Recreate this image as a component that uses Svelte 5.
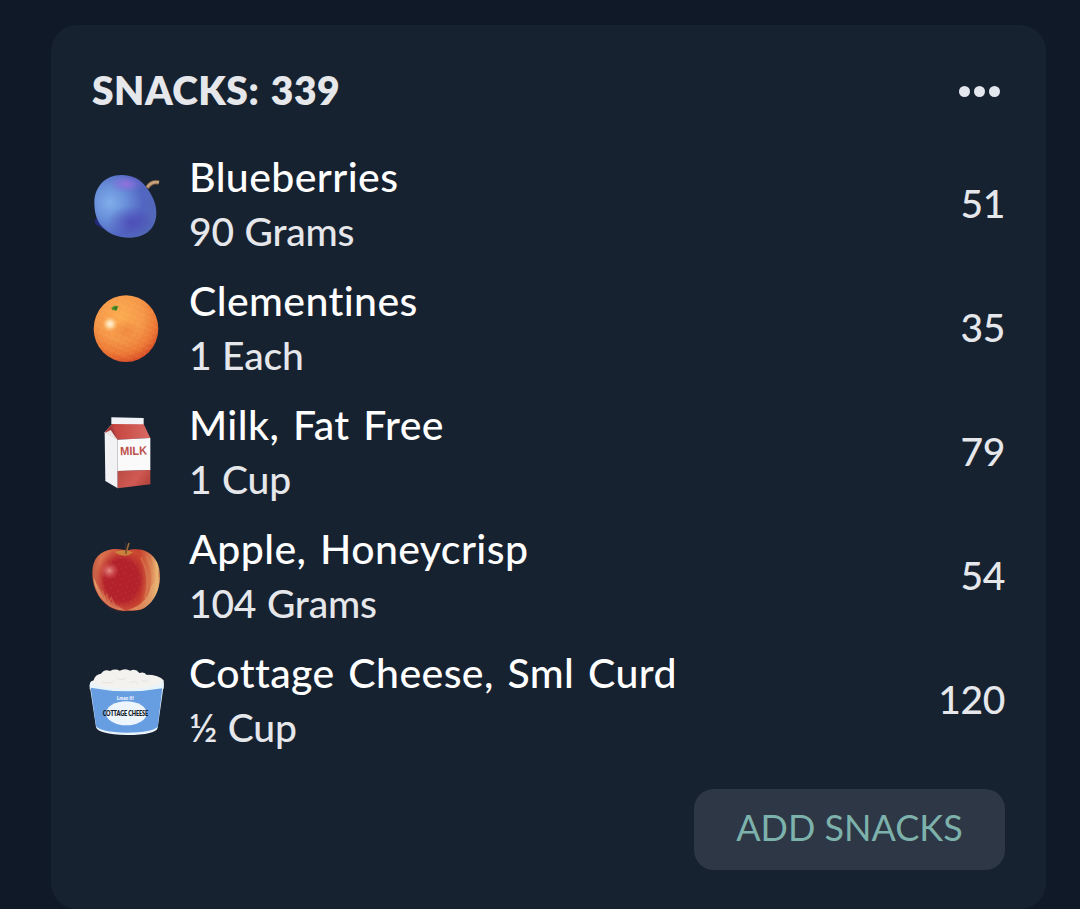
<script>
  const title = 'Snacks';

  const items = [
    { icon: 'blueberry', name: 'Blueberries', amount: '90 Grams', calories: 51 },
    { icon: 'clementine', name: 'Clementines', amount: '1 Each', calories: 35 },
    { icon: 'milk', name: 'Milk, Fat Free', amount: '1 Cup', calories: 79 },
    { icon: 'apple', name: 'Apple, Honeycrisp', amount: '104 Grams', calories: 54 },
    { icon: 'cottage', name: 'Cottage Cheese, Sml Curd', amount: '½ Cup', calories: 120 }
  ];

  const total = items.reduce((sum, item) => sum + item.calories, 0);
</script>

<main>
  <section class="card">
    <header>
      <h2>{title}: {total}</h2>
      <button class="more" aria-label="More options">
        <span></span><span></span><span></span>
      </button>
    </header>

    <ul>
      {#each items as item}
        <li>
          {#if item.icon === 'blueberry'}
            <svg class="icon" viewBox="27 6 228 252">
              <defs>
                <radialGradient id="berry" cx=".25" cy=".44" r=".82">
                  <stop offset="0" stop-color="#80adeb" />
                  <stop offset=".3" stop-color="#6a92db" />
                  <stop offset=".65" stop-color="#5266c2" />
                  <stop offset="1" stop-color="#5268b5" />
                </radialGradient>
                <radialGradient id="bloom">
                  <stop offset="0" stop-color="#9a70df" stop-opacity=".9" />
                  <stop offset="1" stop-color="#806edb" stop-opacity="0" />
                </radialGradient>
                <radialGradient id="shade">
                  <stop offset="0" stop-color="#493daf" stop-opacity=".65" />
                  <stop offset="1" stop-color="#493daf" stop-opacity="0" />
                </radialGradient>
              </defs>
              <path d="M44 180l12-9 22 39-16-7-16-11z" fill="#232979" />
              <path d="M201 85q12-23 36-17" fill="none" stroke="#735139" stroke-width="13" />
              <path d="M202 82q11-19 35-15" fill="none" stroke="#c3a27b" stroke-width="8" />
              <path d="M43 128C43 80 77 45 123 45C160 45 186 61 205 90C220 113 230 135 229 163C227 205 198 232 152 233C118 234 83 223 62 195C48 176 43 153 43 128z" fill="url(#berry)" />
              <ellipse cx="138" cy="72" rx="53" ry="27" fill="url(#bloom)" />
              <ellipse cx="152" cy="184" rx="70" ry="48" fill="url(#shade)" />
            </svg>
          {:else if item.icon === 'clementine'}
            <svg class="icon" viewBox="27 3 228 252">
              <defs>
                <radialGradient id="peel" cx=".4" cy=".3" r=".72">
                  <stop offset="0" stop-color="#fdac52" />
                  <stop offset=".5" stop-color="#f59849" />
                  <stop offset=".8" stop-color="#ec7836" />
                  <stop offset="1" stop-color="#d84d28" />
                </radialGradient>
                <radialGradient id="shine">
                  <stop offset="0" stop-color="#fff3db" />
                  <stop offset=".4" stop-color="#ffe0b0" stop-opacity=".9" />
                  <stop offset="1" stop-color="#ffc07a" stop-opacity="0" />
                </radialGradient>
                <radialGradient id="warm">
                  <stop offset="0" stop-color="#e97736" stop-opacity=".55" />
                  <stop offset="1" stop-color="#e97736" stop-opacity="0" />
                </radialGradient>
                <pattern id="pores" width="19" height="17" patternUnits="userSpaceOnUse" patternTransform="rotate(24)">
                  <circle cx="2" cy="3" r="1.8" fill="#ffcb74" opacity=".4" />
                  <circle cx="13" cy="7" r="1.8" fill="#ffcb74" opacity=".35" />
                  <circle cx="7" cy="12" r="1.6" fill="#d96922" opacity=".25" />
                </pattern>
              </defs>
              <ellipse cx="138" cy="131" rx="97" ry="100" fill="url(#peel)" />
              <ellipse cx="138" cy="138" rx="44" ry="34" fill="url(#warm)" />
              <ellipse cx="138" cy="131" rx="95" ry="98" fill="url(#pores)" />
              <circle cx="90" cy="117" r="23" fill="url(#shine)" />
              <path d="M94 68l9-6 12 1-2 7-4 8-8-3-4 1z" fill="#559126" />
              <path d="M101 69l11-3-5 8z" fill="#286922" />
            </svg>
          {:else if item.icon === 'milk'}
            <svg class="icon" viewBox="27 15 228 252">
              <defs>
                <linearGradient id="roof">
                  <stop offset="0" stop-color="#c5423d" />
                  <stop offset="1" stop-color="#d86a63" />
                </linearGradient>
                <linearGradient id="band" x2="1" y2=".4">
                  <stop offset="0" stop-color="#b94b45" />
                  <stop offset=".65" stop-color="#d05a53" />
                  <stop offset="1" stop-color="#b94740" />
                </linearGradient>
              </defs>
              <path d="M74 82l20-23 19 45v146l-37-22z" fill="#f2f1f4" />
              <path d="M74 82l20-23 19 44z" fill="#a93735" />
              <path d="M75 84l17-9 19 28z" fill="#ece5e7" />
              <path d="M94 57h97l20 42-98 5z" fill="url(#roof)" />
              <path d="M94 37l97 2v19l-97-1z" fill="#f1f3f6" />
              <path d="M113 104l98-5v97l-98 2z" fill="#fbfafb" />
              <path d="M113 198l98-3v43l-98 12z" fill="url(#band)" />
              <text x="121" y="151" transform="rotate(-2 121 151)" textLength="81" lengthAdjust="spacingAndGlyphs" font-family="Liberation Sans, sans-serif" font-weight="700" font-size="36" fill="#bd4f49">MILK</text>
            </svg>
          {:else if item.icon === 'apple'}
            <svg class="icon" viewBox="27 12 228 252">
              <defs>
                <linearGradient id="skin">
                  <stop offset="0" stop-color="#c05a42" />
                  <stop offset=".12" stop-color="#d9714f" />
                  <stop offset=".7" stop-color="#c9442f" />
                  <stop offset=".86" stop-color="#d6784e" />
                  <stop offset=".96" stop-color="#edbd77" />
                  <stop offset="1" stop-color="#bb6947" />
                </linearGradient>
                <radialGradient id="blush">
                  <stop offset="0" stop-color="#b3202a" />
                  <stop offset=".65" stop-color="#b3232b" />
                  <stop offset="1" stop-color="#bc2b2b" stop-opacity="0" />
                </radialGradient>
                <radialGradient id="gloss">
                  <stop offset="0" stop-color="#ef9a91" stop-opacity=".9" />
                  <stop offset="1" stop-color="#d95b57" stop-opacity="0" />
                </radialGradient>
                <pattern id="freckles" width="23" height="19" patternUnits="userSpaceOnUse" patternTransform="rotate(18)">
                  <circle cx="4" cy="5" r="1.5" fill="#ed8270" opacity=".4" />
                  <circle cx="15" cy="14" r="1.3" fill="#ed8270" opacity=".35" />
                </pattern>
              </defs>
              <path d="M37 125c1-39 22-61 59-67 17-3 29 2 43 3 18-3 43-7 63 5 27 15 39 44 38 76-1 35-17 71-44 90-20 14-40 9-61 11-25-2-45-8-63-26-25-24-36-59-35-92z" fill="url(#skin)" />
              <path d="M40 140q4 44 34 75 24 26 61 27-19-14-43-28-32-24-52-74z" fill="#ecb97b" opacity=".75" />
              <path d="M139 241c34-8 66-30 74-72l26-29c1 43-17 75-45 93-15 9-34 8-55 8z" fill="#e8b374" opacity=".6" />
              <ellipse cx="125" cy="151" rx="80" ry="97" fill="url(#blush)" />
              <ellipse cx="127" cy="151" rx="68" ry="80" fill="url(#freckles)" />
              <path d="M182 82q32 58 12 122M199 79q33 54 8 116M215 84q26 48 4 94" fill="none" stroke="#e9a269" stroke-width="5" opacity=".3" />
              <path d="M68 182l8 26 5-15 6 23 7-14 9 24" fill="none" stroke="#e38b59" stroke-width="4" opacity=".4" />
              <ellipse cx="88" cy="122" rx="29" ry="27" fill="url(#gloss)" />
              <path d="M103 65q31-10 57 2-10 9-24 10-18 0-33-12z" fill="#cd8d3d" opacity=".85" />
              <path d="M137 72q5-17 10-33" fill="none" stroke="#9b6a35" stroke-width="5" />
              <path d="M138 71q0-16-2-35" fill="none" stroke="#57352b" stroke-width="2" />
            </svg>
          {:else}
            <svg class="icon" viewBox="27 9 228 252">
              <path d="M29 93q1-14 12-17 4-18 22-20 11-15 27-8 16-8 29-1 17-9 32 0 16-8 27 7 15-4 21 5 39 0 52 17v25q-106 21-222 2z" fill="#f3f2ef" />
              <path d="M29 91q0-8 5-13 15 22 107 24 89-1 108-24 4 7 1 20l-17 120q-3 21-93 22-87-3-92-24z" fill="#e8f4fa" />
              <path d="M32 98q108 21 215 2l-14 115q-15 17-93 18-80-2-92-20z" fill="#679ee2" />
              <path d="M66 80q21 8 34 0m10-12q13 12 28 0m10 16q15-9 26 1m10-8q14 5 22-1" fill="none" stroke="#dedbd4" stroke-width="3" opacity=".6" />
              <ellipse cx="139" cy="175" rx="61" ry="36" fill="#edf5ff" />
              <text x="136" y="134" text-anchor="middle" font-family="Lato, sans-serif" font-size="14" font-weight="900" fill="#f7fbff">Lmao It!</text>
              <g transform="translate(136 182) scale(1 1.5)">
                <text text-anchor="middle" font-family="Lato, sans-serif" font-size="16.5" font-weight="800" letter-spacing="-.3" fill="#101823">COTTAGE CHEESE</text>
              </g>
            </svg>
          {/if}

          <div class="info">
            <span class="name">{item.name}</span>
            <span class="amount">{item.amount}</span>
          </div>
          <span class="calories">{item.calories}</span>
        </li>
      {/each}
    </ul>

    <footer>
      <button class="add">Add {title}</button>
    </footer>
  </section>
</main>

<style>
  :global(body) {
    margin: 0;
    background: #101927;
  }

  main {
    box-sizing: border-box;
    height: 909px;
    padding: 25px 34px 0 51px;
    overflow: hidden;
    font-family: Lato, 'Noto Sans', sans-serif;
    font-weight: 500;
    color: #e5e7eb;
  }

  .card {
    box-sizing: border-box;
    height: 884px;
    padding: 0 41px 0 38px;
    background: #172231;
    border-radius: 26px;
  }

  header {
    display: flex;
    align-items: center;
    justify-content: space-between;
    height: 117px;
    padding: 15px 5px 0 3px;
    box-sizing: border-box;
  }

  h2 {
    margin: 0;
    padding-bottom: 2px;
    font-size: 39px;
    line-height: 60px;
    font-weight: 800;
    letter-spacing: 0.5px;
    word-spacing: 2px;
    text-transform: uppercase;
  }

  button {
    border: none;
    font-family: inherit;
    cursor: pointer;
  }

  .more {
    display: flex;
    gap: 4px;
    padding: 9px 0;
    background: none;
  }

  .more span {
    width: 11px;
    height: 11px;
    border-radius: 50%;
    background: #e5e7ef;
  }

  ul {
    margin: 0;
    padding: 0;
    list-style: none;
  }

  li {
    display: flex;
    align-items: center;
    height: 124px;
  }

  .icon {
    flex: none;
    width: 76px;
    height: 84px;
    overflow: visible;
  }

  .info {
    display: flex;
    flex: 1;
    flex-direction: column;
    margin-left: 24px;
    line-height: 54px;
    white-space: nowrap;
  }

  .name {
    color: #fff;
    font-size: 41px;
    letter-spacing: 0.4px;
    word-spacing: 3px;
  }

  .amount {
    font-size: 39px;
    letter-spacing: -0.2px;
    word-spacing: 1px;
  }

  .calories {
    padding-bottom: 2px;
    font-size: 39px;
    line-height: 54px;
    letter-spacing: -0.4px;
  }

  footer {
    display: flex;
    justify-content: flex-end;
    padding-top: 27px;
  }

  .add {
    width: 311px;
    height: 81px;
    padding: 0 0 5px;
    border-radius: 20px;
    background: #2e3745;
    color: #7db1ac;
    font-size: 36px;
    text-transform: uppercase;
  }
</style>
